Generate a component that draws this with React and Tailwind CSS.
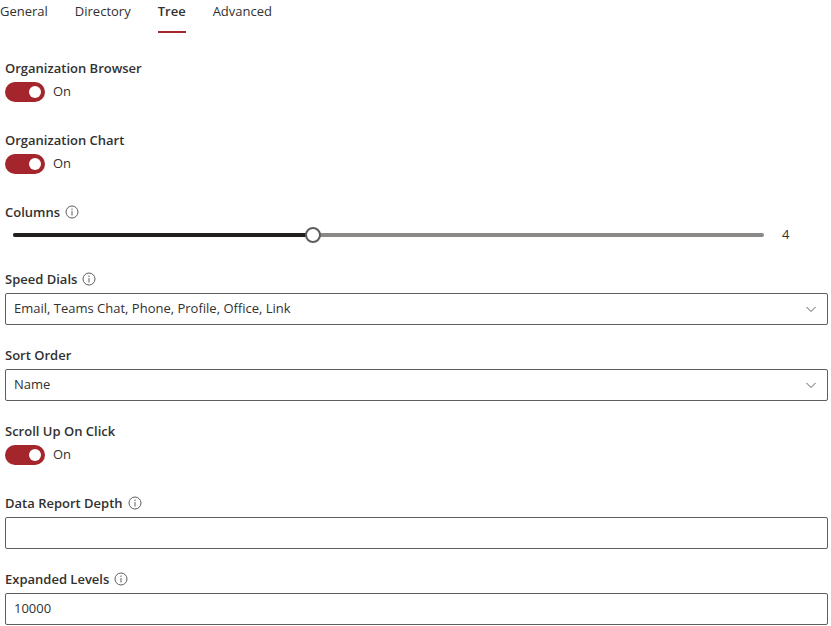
import { useState } from "react";

const font = { fontFamily: '"Open Sans", "Noto Sans", sans-serif' };

function Info() {
  return (
    <svg width="14" height="14" viewBox="0 0 14 14" className="ml-[5px] text-[#605e5c]">
      <circle cx="7" cy="7" r="6" fill="none" stroke="currentColor" strokeWidth="1" />
      <line x1="7" y1="6" x2="7" y2="10.5" stroke="currentColor" strokeWidth="1" />
      <circle cx="7" cy="4.2" r="0.7" fill="currentColor" />
    </svg>
  );
}

function Label({ children, info }) {
  return (
    <div className="flex items-center h-5 text-[13px] font-semibold text-[#323130] leading-5">
      {children}
      {info && <Info />}
    </div>
  );
}

function Toggle() {
  const [on, setOn] = useState(true);
  return (
    <div className="mt-1 flex items-center h-5">
      <button
        onClick={() => setOn(!on)}
        className={`w-10 h-5 rounded-full flex items-center px-[4px] ${on ? "bg-[#a4262c] justify-end" : "bg-white border border-[#323130] justify-start"}`}
      >
        <span className={`w-3 h-3 rounded-full ${on ? "bg-white" : "bg-[#605e5c]"}`} />
      </button>
      <span className="ml-2 text-[13px] text-[#323130]">{on ? "On" : "Off"}</span>
    </div>
  );
}

function Dropdown({ value }) {
  return (
    <div className="mt-1 h-8 border border-[#605e5c] rounded-[2px] flex items-center pl-2 pr-[10px] bg-white">
      <span className="flex-1 text-[13px] text-[#323130] truncate">{value}</span>
      <svg width="12" height="12" viewBox="0 0 12 12" className="text-[#605e5c]">
        <polyline points="1.5,4 6,8.5 10.5,4" fill="none" stroke="currentColor" strokeWidth="1" />
      </svg>
    </div>
  );
}

function Input({ value }) {
  return (
    <div className="mt-1 h-8 border border-[#605e5c] rounded-[2px] flex items-center pl-2 bg-white">
      <span className="text-[13px] text-[#323130]">{value}</span>
    </div>
  );
}

export default function App() {
  const tabs = ["General", "Directory", "Tree", "Advanced"];
  const pct = 40;

  return (
    <div className="w-[831px] h-[626px] bg-white overflow-hidden pl-[5px] pr-[3px]" style={font}>
      {/* Tabs */}
      <div className="flex gap-[27px] -ml-[5px] h-[33px]">
        {tabs.map((t) => (
          <div key={t} className="flex flex-col">
            <span className={`text-[13px] leading-[22px] text-[#323130] ${t === "Tree" ? "font-semibold" : ""}`}>{t}</span>
            <span className={`mt-[9px] h-[2px] ${t === "Tree" ? "bg-[#a4262c]" : ""}`} />
          </div>
        ))}
      </div>

      <div className="mt-[25px]">
        <Label>Organization Browser</Label>
        <Toggle />
      </div>

      <div className="mt-[28px]">
        <Label>Organization Chart</Label>
        <Toggle />
      </div>

      <div className="mt-[28px]">
        <Label info>Columns</Label>
        <div className="mt-[3px] h-[20px] flex items-center">
          <div className="flex-1 px-2">
            <div className="relative h-1 rounded-full bg-[#8a8886]">
              <div className="h-1 rounded-full bg-[#201f1e]" style={{ width: `${pct}%` }} />
              <div
                className="absolute top-1/2 w-4 h-4 -mt-2 -ml-2 rounded-full bg-white border-2 border-[#605e5c]"
                style={{ left: `${pct}%` }}
              />
            </div>
          </div>
          <span className="ml-[10px] w-[46px] text-[13px] text-[#323130]">4</span>
        </div>
      </div>

      <div className="mt-[24px]">
        <Label info>Speed Dials</Label>
        <Dropdown value="Email, Teams Chat, Phone, Profile, Office, Link" />
      </div>

      <div className="mt-[20px]">
        <Label>Sort Order</Label>
        <Dropdown value="Name" />
      </div>

      <div className="mt-[20px]">
        <Label>Scroll Up On Click</Label>
        <Toggle />
      </div>

      <div className="mt-[28px]">
        <Label info>Data Report Depth</Label>
        <Input value="" />
      </div>

      <div className="mt-[20px]">
        <Label info>Expanded Levels</Label>
        <Input value="10000" />
      </div>
    </div>
  );
}
